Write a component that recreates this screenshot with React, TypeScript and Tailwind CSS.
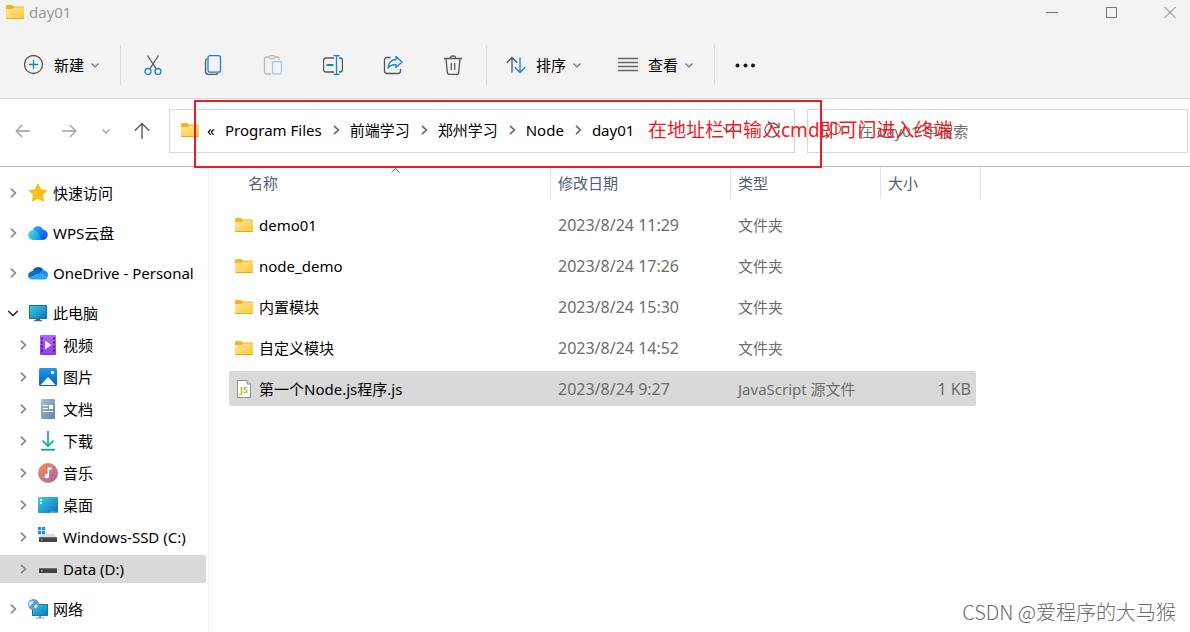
import { useState } from "react";
import type { ReactNode } from "react";

const Chevron = ({ className }: { className?: string }) => (
  <svg className={className} viewBox="0 0 8 5" width="8" height="5" fill="none" stroke="currentColor" strokeWidth="1.2">
    <path d="M0.5 0.5 4 4 7.5 0.5" />
  </svg>
);

const ChevronRight = ({ className }: { className?: string }) => (
  <svg className={className} width="10" height="10" viewBox="0 0 10 10" fill="none" stroke="currentColor" strokeWidth="1.6">
    <path d="M3 0.8 7.4 5 3 9.2" />
  </svg>
);

const FolderIcon = () => (
  <svg width="18" height="14" viewBox="0 0 18 14" className="shrink-0">
    <defs>
      <linearGradient id="folder" x1="0" y1="0" x2="1" y2="1">
        <stop offset="0" stopColor="#ffe79b" />
        <stop offset="1" stopColor="#fcc737" />
      </linearGradient>
    </defs>
    <path d="M0 1a1 1 0 0 1 1-1h5l2 1.6h9a1 1 0 0 1 1 1V6H0z" fill="#f8b31d" />
    <path d="M0 4h6.6L8.4 2.6H18V13a1 1 0 0 1-1 1H1a1 1 0 0 1-1-1z" fill="url(#folder)" />
    <path d="M0 13h18a1 1 0 0 1-1 1H1a1 1 0 0 1-1-1z" fill="#e8a825" />
  </svg>
);

const JsFileIcon = () => (
  <svg width="14" height="18" viewBox="0 0 14 18" className="mx-[2px] shrink-0">
    <path d="M0.5 0.5H10L13.5 4v13.5H0.5z" fill="#fdfdf8" stroke="#8f8f8f" />
    <path d="M10 0.5V4h3.5" fill="#ddd" stroke="#8f8f8f" />
    <text x="7" y="13" textAnchor="middle" fontSize="9" fontWeight="700" fontFamily="Open Sans, sans-serif" fill="#b2bc38">
      JS
    </text>
  </svg>
);

const StarIcon = () => (
  <svg width="20" height="20" viewBox="0 0 20 20">
    <path d="m10 1 2.7 5.8 6.2.8-4.5 4.3 1.1 6.3L10 15.1l-5.5 3.1 1.1-6.3L1.1 7.6l6.2-.8z" fill="#fdc010" stroke="#fbb80c" strokeLinejoin="round" />
  </svg>
);

const WpsIcon = () => (
  <svg width="20" height="20" viewBox="0 0 20 20">
    <defs>
      <linearGradient id="wpsA" x1="0" y1="0" x2="1" y2="1">
        <stop offset="0" stopColor="#1fb6ff" />
        <stop offset="1" stopColor="#0947d9" />
      </linearGradient>
      <linearGradient id="wpsB" x1="0" y1="0" x2="1" y2="0.4">
        <stop offset="0" stopColor="#49ecc4" />
        <stop offset="1" stopColor="#1a8cf5" />
      </linearGradient>
    </defs>
    <path d="M5 7a5.2 5.2 0 0 1 9.8-.6A5.3 5.3 0 0 1 14 17H8z" fill="url(#wpsA)" />
    <path d="M5 7.2c2.500-.8 5 1 5.800 3.400.8 2.400 1.200 5.200 4 6.400H5A4.900 4.900 0 0 1 5 7.200z" fill="url(#wpsB)" />
  </svg>
);

const OneDriveIcon = () => (
  <svg width="20" height="20" viewBox="0 0 20 20">
    <path d="M4.500 8.200A6 6 0 0 1 15.500 7.200L12 11z" fill="#0f5fb8" />
    <path d="M4.500 8a4.500 4.500 0 0 0-3.600 7l10.600-4.400L8 8.400A5 5 0 0 0 4.500 8z" fill="#0c6fcd" />
    <path d="M15.500 7.200a4.600 4.600 0 0 1 3.800 7l-8-3.800 2-2.600a5 5 0 0 1 2.200-.6z" fill="#1a90e4" />
    <path d="m.9 15 10.400-4.600 8.200 3.900A3.600 3.600 0 0 1 16 16.500H4.500A4.400 4.400 0 0 1 .9 15z" fill="#28a8ea" />
  </svg>
);

const ScreenGradient = ({ id }: { id: string }) => (
  <defs>
    <linearGradient id={id} x1="0" y1="0" x2="1" y2="1">
      <stop offset="0" stopColor="#35d3e0" />
      <stop offset="1" stopColor="#0f6fc0" />
    </linearGradient>
  </defs>
);

const PcIcon = () => (
  <svg width="20" height="20" viewBox="0 0 20 20">
    <ScreenGradient id="pc" />
    <rect x="1.5" y="2.5" width="17" height="13" fill="url(#pc)" stroke="#1d6f96" />
    <path d="M8 16h4v1.500h2V18H6v-.5h2z" fill="#56616c" stroke="#56616c" strokeWidth="0.5" />
  </svg>
);

const VideoIcon = () => (
  <svg width="20" height="20" viewBox="0 0 20 20">
    <defs>
      <linearGradient id="video" x1="0" y1="0" x2="0" y2="1">
        <stop offset="0" stopColor="#b066f5" />
        <stop offset="1" stopColor="#8a3fe0" />
      </linearGradient>
    </defs>
    <rect x="2" width="16" height="20" rx="1.2" fill="url(#video)" />
    <path d="M4 2.500v16M16 2.500v16" stroke="#4a1a94" strokeWidth="1.8" strokeDasharray="2 2" />
    <path d="M7 5.500v9l6.500-4.500z" fill="#f4ecfd" />
  </svg>
);

const PictureIcon = () => (
  <svg width="20" height="20" viewBox="0 0 20 20">
    <defs>
      <linearGradient id="picture" x1="0" y1="0" x2="0" y2="1">
        <stop offset="0" stopColor="#1b9be9" />
        <stop offset="1" stopColor="#0a5cb8" />
      </linearGradient>
    </defs>
    <rect x="1" y="1" width="18" height="18" rx="1.5" fill="url(#picture)" />
    <path d="m2.500 18 7-7.500a.8.800 0 0 1 1.100 0l7 7.500z" fill="#f3f9fe" />
    <circle cx="14.5" cy="5.5" r="1.7" fill="#fff" />
  </svg>
);

const DocumentIcon = () => (
  <svg width="20" height="20" viewBox="0 0 20 20">
    <defs>
      <linearGradient id="doc" x1="0" y1="0" x2="1" y2="1">
        <stop offset="0" stopColor="#a9c0d4" />
        <stop offset="1" stopColor="#6484a5" />
      </linearGradient>
    </defs>
    <rect x="3" width="14" height="20" rx="1.2" fill="url(#doc)" />
    <path d="M5 6.500h5M5 9.500h5M5 12.500h10" stroke="#fff" strokeWidth="1.1" />
    <rect x="11" y="6" width="4" height="4" fill="#fff" />
  </svg>
);

const DownloadIcon = () => (
  <svg width="20" height="20" viewBox="0 0 20 20" fill="none" stroke="#1fb393" strokeWidth="1.8">
    <path d="M10 0v15M4.500 9.700 10 15.200l5.500-5.500" />
    <path d="M3 18.700h14" stroke="#12a192" />
  </svg>
);

const MusicIcon = () => (
  <svg width="20" height="20" viewBox="0 0 20 20">
    <defs>
      <linearGradient id="music" x1="0" y1="0" x2="1" y2="1">
        <stop offset="0.1" stopColor="#f08a56" />
        <stop offset="1" stopColor="#a85fb4" />
      </linearGradient>
    </defs>
    <circle cx="10" cy="10" r="10" fill="url(#music)" />
    <path d="M9.600 4.500h4v2.300h-2.500V13a2.300 2.300 0 1 1-1.500-2.100z" fill="#fff" />
  </svg>
);

const DesktopIcon = () => (
  <svg width="20" height="20" viewBox="0 0 20 20">
    <ScreenGradient id="desktop" />
    <rect y="2" width="20" height="16" rx="1" fill="url(#desktop)" />
    <path d="M2 5h2M2 8h2" stroke="#e8fbff" strokeWidth="2" />
    <path d="M12 17.200h1.500M14.800 17.200h1.500M17.400 17.200h1.300" stroke="#cdeafb" />
  </svg>
);

const DriveBody = () => (
  <>
    <path d="M4 8h12l3 3.500H1z" fill="#dcdde2" />
    <rect x="1" y="11" width="18" height="5" fill="#454545" />
    <rect x="1" y="11" width="18" height="1" fill="#6c6c6c" />
    <rect x="3" y="13" width="1.5" height="1.5" fill="#4be35c" />
  </>
);

const WindowsDriveIcon = () => (
  <svg width="20" height="20" viewBox="0 0 20 20">
    <g transform="translate(0 -1)">
      <DriveBody />
    </g>
    <path d="M0 0h8v7.500H0z" fill="#fff" />
    <path d="M0 0h3.200v3.200H0zM4 0h3.200v3.200H4zM0 4h3.200v3.200H0zM4 4h3.200v3.200H4z" fill="#1a8fe3" />
  </svg>
);

const DriveIcon = () => (
  <svg width="20" height="20" viewBox="0 0 20 20">
    <g transform="translate(0 -2)">
      <DriveBody />
    </g>
  </svg>
);

const NetworkIcon = () => (
  <svg width="20" height="20" viewBox="0 0 20 20">
    <ScreenGradient id="net" />
    <rect x="4.5" y="5.5" width="15" height="11" fill="url(#net)" stroke="#1d78a8" />
    <path d="M11 17h2v1.500h3v.9H8v-.9h3z" fill="#8a939c" />
    <circle cx="5.5" cy="5.5" r="5.5" fill="#5b9cc4" />
    <path d="M2 2.500c2-1.500 4-.5 3.500 1S3 5 2.500 7 .5 6 .8 4zM7 6c1.500-1 3 0 2.500 1.500S7 10 6.500 9 6 7 7 6z" fill="#cfe6f2" />
  </svg>
);

const treeItems: { name: string; icon: ReactNode; child?: boolean; open?: boolean }[] = [
  { name: "快速访问", icon: <StarIcon /> },
  { name: "WPS云盘", icon: <WpsIcon /> },
  { name: "OneDrive - Personal", icon: <OneDriveIcon /> },
  { name: "此电脑", icon: <PcIcon />, open: true },
  { name: "视频", icon: <VideoIcon />, child: true },
  { name: "图片", icon: <PictureIcon />, child: true },
  { name: "文档", icon: <DocumentIcon />, child: true },
  { name: "下载", icon: <DownloadIcon />, child: true },
  { name: "音乐", icon: <MusicIcon />, child: true },
  { name: "桌面", icon: <DesktopIcon />, child: true },
  { name: "Windows-SSD (C:)", icon: <WindowsDriveIcon />, child: true },
  { name: "Data (D:)", icon: <DriveIcon />, child: true },
  { name: "网络", icon: <NetworkIcon /> },
];

const files = [
  { name: "demo01", date: "2023/8/24 11:29", type: "文件夹", size: "" },
  { name: "node_demo", date: "2023/8/24 17:26", type: "文件夹", size: "" },
  { name: "内置模块", date: "2023/8/24 15:30", type: "文件夹", size: "" },
  { name: "自定义模块", date: "2023/8/24 14:52", type: "文件夹", size: "" },
  { name: "第一个Node.js程序.js", date: "2023/8/24 9:27", type: "JavaScript 源文件", size: "1 KB" },
];

const crumbs = ["Program Files", "前端学习", "郑州学习", "Node", "day01"];

const tools: { label: string; icon: ReactNode }[] = [
  {
    label: "剪切",
    icon: (
      <>
        <path d="M4.500 0.500 13 13.500M15.500 0.500 7 13.500" stroke="#555" />
        <circle cx="5" cy="16.5" r="3" stroke="#1683d8" />
        <circle cx="15" cy="16.5" r="3" stroke="#1683d8" />
      </>
    ),
  },
  {
    label: "复制",
    icon: (
      <>
        <path d="M4.500 3.500C3 4 2.500 4.500 2.500 6v10.500a3 3 0 0 0 3 3h7c1.500 0 2-.5 2.500-1.500" stroke="#555" />
        <rect x="5" y="0.7" width="12.5" height="16.5" rx="2" stroke="#1683d8" />
      </>
    ),
  },
  {
    label: "粘贴",
    icon: (
      <>
        <path d="M6 2H3a1.500 1.500 0 0 0-1.500 1.500v14A1.500 1.500 0 0 0 3 19h5M12 2h2.500A1.500 1.500 0 0 1 16 3.500V5" stroke="#bbb" />
        <rect x="6" y="0.6" width="6" height="3" rx="1.5" stroke="#bbb" />
        <rect x="9.5" y="6.5" width="9" height="12.5" rx="1.5" stroke="#a3cbee" />
      </>
    ),
  },
  {
    label: "重命名",
    icon: (
      <>
        <path d="M11 3H3a2.500 2.500 0 0 0-2.500 2.500v9A2.500 2.500 0 0 0 3 17h8M16 3h1a2.500 2.500 0 0 1 2.500 2.500v9A2.500 2.500 0 0 1 17 17h-1" stroke="#555" />
        <path d="M3.500 10h7" stroke="#1683d8" strokeWidth="2" />
        <path d="M13.500 0.500v19M10.500 0.600h6M10.500 19.400h6" stroke="#1683d8" />
      </>
    ),
  },
  {
    label: "共享",
    icon: (
      <>
        <path d="M7.500 2.500H4A2.500 2.500 0 0 0 1.500 5v11A2.500 2.500 0 0 0 4 18.500h11a2.500 2.500 0 0 0 2.500-2.500v-2" stroke="#555" />
        <path d="M13 1.500 19 7l-6 5.500V9.500C9 9.500 7 10.500 5 13c.3-5 3-8 8-8.500z" stroke="#1683d8" strokeLinejoin="round" />
      </>
    ),
  },
  {
    label: "删除",
    icon: (
      <path
        d="M1 3.500h18M7.300 3.500a2.700 2.700 0 0 1 5.400 0M3 3.500l1.300 14A2 2 0 0 0 6.300 19.400h7.400a2 2 0 0 0 2-1.900L17 3.500M8.300 8v7M11.700 8v7"
        stroke="#555"
      />
    ),
  },
];

const Divider = () => <div className="h-10 w-px shrink-0 bg-[#dedede]" />;

const MenuButton = ({ label, children }: { label: string; children: ReactNode }) => (
  <button className="flex items-center gap-[10px]">
    <svg width="20" height="20" viewBox="0 0 20 20" fill="none" strokeWidth="1.3">
      {children}
    </svg>
    <span className="flex items-center gap-[7px]">
      {label}
      <Chevron className="text-[#777]" />
    </span>
  </button>
);

const WindowHeader = () => (
  <header className="border-b border-[#dcdcdc] bg-[#f3f3f3]">
    <div className="flex h-6 items-center justify-between pl-[6px]">
      <div className="flex items-center gap-[5px]">
        <FolderIcon />
        <h1 className="text-[#999]">day01</h1>
      </div>
      <div className="flex text-[#777]">
        {[
          { label: "最小化", d: "M0 6.500h12" },
          { label: "最大化", d: "M1.500 1.500h10v10h-10z" },
          { label: "关闭", d: "M0.500 1 11.500 12M11.500 1 0.500 12" },
        ].map((control) => (
          <button key={control.label} aria-label={control.label} className="flex w-[59px] justify-end pr-[14px]">
            <svg width="12" height="13" viewBox="0 0 12 13" fill="none" stroke="currentColor">
              <path d={control.d} />
            </svg>
          </button>
        ))}
      </div>
    </div>
    <div className="flex h-[74px] items-center pt-2 pl-6">
      <div className="pr-[21px]">
        <MenuButton label="新建">
          <circle cx="9.5" cy="9.5" r="9" stroke="#555" />
          <path d="M9.500 5v9M5 9.500h9" stroke="#1683d8" />
        </MenuButton>
      </div>
      <Divider />
      <div className="mr-[3px] ml-[2px] flex">
        {tools.map((tool) => (
          <button key={tool.label} aria-label={tool.label} className="flex h-10 w-[60px] items-center justify-center">
            <svg width="20" height="20" viewBox="0 0 20 20" fill="none" strokeWidth="1.3">
              {tool.icon}
            </svg>
          </button>
        ))}
      </div>
      <Divider />
      <div className="flex gap-[37px] pr-[21px] pl-[19px]">
        <MenuButton label="排序">
          <path d="M6 17.500V2.500M0.800 7.700 6 2.500l5.200 5.200" stroke="#555" />
          <path d="M14 2.500v15M8.800 12.300l5.200 5.200 5.200-5.200" stroke="#1683d8" />
        </MenuButton>
        <MenuButton label="查看">
          <path d="M0 3.500h20M0 7.500h20M0 11.500h20M0 15.500h20" stroke="#666" />
        </MenuButton>
      </div>
      <Divider />
      <button aria-label="查看更多" className="ml-5">
        <svg width="20" height="20" viewBox="0 0 20 20" fill="#1a1a1a">
          <circle cx="2.5" cy="10.5" r="2" />
          <circle cx="10.5" cy="10.5" r="2" />
          <circle cx="18" cy="10.5" r="2" />
        </svg>
      </button>
    </div>
  </header>
);

const NavigationBar = () => {
  const [query, setQuery] = useState("");

  return (
    <div className="relative flex items-center border-b border-[#bdbdbd] pt-[10px] pr-[2px] pb-[13px] pl-[15px]">
      <div className="flex w-[154px] shrink-0 items-center">
        <button aria-label="后退" className="text-[#a0a0a0]">
          <svg width="16" height="16" viewBox="0 0 16 16" fill="none" stroke="currentColor" strokeWidth="1.3">
            <path d="M15 8H1.500M7 2 1.200 8 7 14" />
          </svg>
        </button>
        <button aria-label="前进" className="ml-[30px] text-[#a0a0a0]">
          <svg width="16" height="16" viewBox="0 0 16 16" fill="none" stroke="currentColor" strokeWidth="1.3">
            <path d="M1 8h13.500M9 2l5.800 6L9 14" />
          </svg>
        </button>
        <button aria-label="最近浏览的位置" className="ml-[25px] text-[#999]">
          <Chevron />
        </button>
        <button aria-label="上移" className="ml-6 text-[#5a5a5a]">
          <svg width="16" height="18" viewBox="0 0 16 18" fill="none" stroke="currentColor" strokeWidth="1.4">
            <path d="M8 17V1.500M0.800 8.700 8 1.500l7.200 7.200" />
          </svg>
        </button>
      </div>

      <nav className="flex h-11 flex-1 items-center border border-[#d9d9d9] pb-[2px] pl-[11px] whitespace-nowrap">
        <FolderIcon />
        <span className="mx-2 w-[10px]">«</span>
        {crumbs.map((crumb, index) => (
          <div key={crumb} className="flex items-center">
            {index > 0 && <ChevronRight className="mx-[9px] text-[#666]" />}
            <a href="#">{crumb}</a>
          </div>
        ))}
        <div className="ml-auto flex items-center gap-[30px] pr-[14px] text-[#666]">
          <button aria-label="以前的位置">
            <svg width="12" height="8" viewBox="0 0 12 8" fill="none" stroke="currentColor" strokeWidth="1.3">
              <path d="M1 1l5 5 5-5" />
            </svg>
          </button>
          <button aria-label="刷新">
            <svg width="16" height="16" viewBox="0 0 16 16" fill="none" stroke="currentColor" strokeWidth="1.3">
              <path d="M14.500 5.500A7 7 0 1 0 15 8M15 0.500v5h-5" />
            </svg>
          </button>
        </div>
      </nav>

      <label className="ml-3 flex h-11 w-[381px] items-center gap-4 border border-[#d9d9d9] pl-4">
        <svg width="18" height="18" viewBox="0 0 18 18" fill="none" stroke="#777" strokeWidth="1.2" className="shrink-0">
          <circle cx="11" cy="7" r="5.5" />
          <path d="M7 11 1.500 16.500" />
        </svg>
        <input
          aria-label="搜索"
          className="min-w-0 flex-1 outline-none placeholder:text-[#707070]"
          placeholder="在 day01 中搜索"
          value={query}
          onChange={(e) => setQuery(e.target.value)}
        />
      </label>

      {/* red callout over the address bar */}
      <div className="pointer-events-none absolute top-px left-[194px] z-10 h-[68px] w-[628px] border-2 border-[#ed1c24]" />
      <p className="pointer-events-none absolute top-[17px] left-[648px] z-10 text-[19px] leading-7 whitespace-nowrap text-[#ed1c24]">
        在地址栏中输入cmd即可门进入终端
      </p>
    </div>
  );
};

const Sidebar = () => {
  const [selected, setSelected] = useState("Data (D:)");

  return (
    <aside className="w-[209px] shrink-0 border-r border-[#f0f0f0] pr-[2px]">
      <ul>
        {treeItems.map((item) => (
          <li key={item.name} className={item.child ? "pt-1" : "pt-3"}>
            <button
              className={`flex h-7 w-full items-center rounded-r-xs whitespace-nowrap ${
                item.child ? "pl-[18px]" : "pl-2"
              } ${selected === item.name ? "bg-[#d9d9d9]" : ""}`}
              onClick={() => setSelected(item.name)}
            >
              {item.open ? (
                <svg width="10" height="10" viewBox="0 0 10 10" fill="none" stroke="#222" strokeWidth="1.5">
                  <path d="M0.300 3 5 7.500 9.700 3" />
                </svg>
              ) : (
                <ChevronRight className="text-[#858585]" />
              )}
              <span className="mr-[5px] ml-[10px] h-5 w-5 shrink-0">{item.icon}</span>
              {item.name}
            </button>
          </li>
        ))}
      </ul>
    </aside>
  );
};

const FileTable = () => {
  const [selected, setSelected] = useState("第一个Node.js程序.js");

  return (
    <main className="min-w-0 flex-1 pl-5">
      <table className="w-[752px] table-fixed border-collapse text-left">
        <thead className="text-[#4c607a]">
          <tr className="h-[37px] align-top">
            <th className="relative w-[322px] p-0 font-normal">
              <div className="h-8 border-r border-[#e2e2e2] pl-[19px] leading-8">名称</div>
              <svg className="absolute top-px left-[162px]" width="9" height="5" viewBox="0 0 9 5" fill="none" stroke="#555">
                <path d="M0.500 4.500 4.500 0.500 8.500 4.500" />
              </svg>
            </th>
            <th className="w-[180px] p-0 font-normal">
              <div className="h-8 border-r border-[#e2e2e2] pl-[7px] leading-8">修改日期</div>
            </th>
            <th className="w-[150px] p-0 font-normal">
              <div className="h-8 border-r border-[#e2e2e2] pl-[7px] leading-8">类型</div>
            </th>
            <th className="w-[100px] p-0 font-normal">
              <div className="h-8 border-r border-[#e2e2e2] pl-[7px] leading-8">大小</div>
            </th>
          </tr>
        </thead>
        <tbody>
          {files.map((file) => {
            const bg = selected === file.name ? "bg-[#d9d9d9]" : "";
            return (
              <tr key={file.name} className="h-[41px] text-[#6d6d6d]" onClick={() => setSelected(file.name)}>
                <td className="p-0">
                  <div className={`flex h-[35px] items-center gap-[6px] rounded-l-xs pl-[6px] text-black ${bg}`}>
                    {file.name.endsWith(".js") ? <JsFileIcon /> : <FolderIcon />}
                    {file.name}
                  </div>
                </td>
                <td className="p-0">
                  <div className={`flex h-[35px] items-center pl-[7px] text-base leading-5 ${bg}`}>{file.date}</div>
                </td>
                <td className="p-0">
                  <div className={`flex h-[35px] items-center pl-[7px] ${bg}`}>{file.type}</div>
                </td>
                <td className="p-0 pr-[5px]">
                  <div className={`flex h-[35px] items-center justify-end rounded-r-xs pr-[5px] text-base leading-5 ${bg}`}>
                    {file.size}
                  </div>
                </td>
              </tr>
            );
          })}
        </tbody>
      </table>
    </main>
  );
};

export default function App() {
  return (
    <div className="relative flex min-h-screen flex-col bg-white font-['Noto_Sans','Noto_Sans_CJK_SC',sans-serif] text-[15px] leading-5 text-black">
      <WindowHeader />
      <NavigationBar />
      <div className="flex flex-1">
        <Sidebar />
        <FileTable />
      </div>
      <p className="pointer-events-none absolute right-[14px] bottom-[6px] font-['Noto_Sans_CJK_SC',sans-serif] text-[20px] leading-7 font-light text-[#6b6b6b]">
        CSDN @爱程序的大马猴
      </p>
    </div>
  );
}
